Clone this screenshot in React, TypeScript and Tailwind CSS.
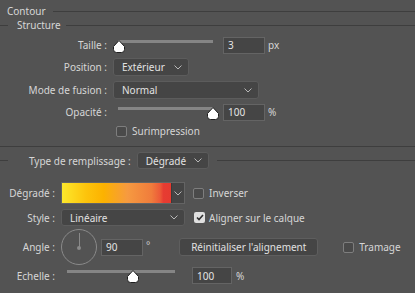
import React from 'react';

const Chevron = () => (
  <svg width="8" height="5" viewBox="0 0 8 5" className="shrink-0">
    <polyline points="0.5,0.5 4,4 7.5,0.5" fill="none" stroke="#b8b8b8" strokeWidth="1" />
  </svg>
);

const Thumb = () => (
  <svg width="12" height="13" viewBox="0 0 12 13">
    <path d="M6 0.5 L11.5 6.5 V9.5 Q11.5 12.5 8.5 12.5 H3.5 Q0.5 12.5 0.5 9.5 V6.5 Z" fill="#ffffff" stroke="#1e1e1e" strokeWidth="1" />
  </svg>
);

function Slider({ width, pos }: { width: number; pos: number }) {
  return (
    <div className="relative h-full shrink-0" style={{ width }}>
      <div className="absolute left-0 right-0 top-[4px] h-[3px] bg-[#858585]" />
      <div className="absolute top-[4px] flex" style={{ left: pos - 6 }}>
        <Thumb />
      </div>
    </div>
  );
}

function Select({ value, className }: { value: string; className: string }) {
  return (
    <div className={`flex items-center justify-between rounded-[3px] border border-[#5c5c5c] bg-[#454545] pl-[8px] pr-[6px] text-[#e2e2e2] ${className}`}>
      <span>{value}</span>
      <Chevron />
    </div>
  );
}

function NumInput({ value, className }: { value: string; className: string }) {
  return (
    <div className={`flex items-center border border-[#646464] bg-[#454545] pl-[4px] text-[#e4e4e4] ${className}`}>
      {value}
    </div>
  );
}

function Check({ checked }: { checked?: boolean }) {
  return checked ? (
    <div className="flex h-[11px] w-[11px] shrink-0 items-center justify-center rounded-[2px] bg-[#e0e0e0]">
      <svg width="8" height="7" viewBox="0 0 8 7">
        <polyline points="1,3.5 3,5.5 7,1" fill="none" stroke="#303030" strokeWidth="1.6" />
      </svg>
    </div>
  ) : (
    <div className="h-[11px] w-[11px] shrink-0 rounded-[2px] border border-[#7e7e7e] bg-[#4a4a4a]" />
  );
}

const Line = ({ className }: { className: string }) => <div className={`h-px bg-[#3e3e3e] ${className}`} />;

export default function App() {
  return (
    <div
      className="h-[293px] w-[415px] overflow-hidden bg-[#535353] pt-[4px] text-[10px] leading-none text-[#d6d6d6]"
      style={{ fontFamily: '"Noto Sans", "Liberation Sans", sans-serif' }}
    >
      {/* Contour */}
      <div className="flex h-[14px] items-center">
        <span className="ml-[7px]">Contour</span>
        <Line className="ml-[7px] flex-1" />
      </div>
      <div className="flex h-[14px] items-center">
        <Line className="w-[8px]" />
        <span className="ml-[9px]">Structure</span>
        <Line className="ml-[5px] flex-1" />
      </div>

      {/* Taille */}
      <div className="mt-[4px] flex h-[18px] items-center">
        <div className="w-[107px] text-right">Taille :</div>
        <div className="ml-[11px] h-full">
          <Slider width={95} pos={1} />
        </div>
        <NumInput value="3" className="ml-[10px] h-[17px] w-[42px]" />
        <span className="ml-[3px]">px</span>
      </div>

      {/* Position */}
      <div className="mt-[4px] flex h-[18px] items-center">
        <div className="w-[107px] text-right">Position :</div>
        <Select value="Extérieur" className="ml-[6px] h-[18px] w-[76px]" />
      </div>

      {/* Mode de fusion */}
      <div className="mt-[5px] flex h-[18px] items-center">
        <div className="w-[107px] text-right">Mode de fusion :</div>
        <Select value="Normal" className="ml-[6px] h-[18px] w-[146px]" />
      </div>

      {/* Opacité */}
      <div className="mt-[4px] flex h-[18px] items-center">
        <div className="w-[107px] text-right">Opacité :</div>
        <div className="ml-[11px] h-full">
          <Slider width={95} pos={95} />
        </div>
        <NumInput value="100" className="ml-[10px] h-[17px] w-[42px]" />
        <span className="ml-[3px]">%</span>
      </div>

      {/* Surimpression */}
      <div className="mt-[3px] flex h-[14px] items-center pl-[116px]">
        <Check />
        <span className="ml-[5px]">Surimpression</span>
      </div>

      <Line className="mt-[8px] w-full" />

      {/* Type de remplissage */}
      <div className="mt-[5px] flex h-[17px] items-center">
        <Line className="w-[8px]" />
        <span className="ml-[21px]">Type de remplissage :</span>
        <Select value="Dégradé" className="ml-[6px] h-[17px] w-[72px]" />
        <Line className="ml-[8px] flex-1" />
      </div>

      {/* Dégradé */}
      <div className="mt-[13px] flex h-[22px] items-center">
        <div className="w-[55px] text-right">Dégradé :</div>
        <div className="ml-[6px] flex h-[22px] w-[124px] border border-[#646464] bg-[#454545]">
          <div className="h-full flex-1 bg-[linear-gradient(90deg,#fde82c_0%,#fdc40c_22%,#fcb200_38%,#f69a40_60%,#f07c3c_82%,#ec5a38_90%,#e73c32_93%,#e53a30_100%)]" />
          <div className="flex w-[13px] items-center justify-center border-l border-[#3a3a3a]">
            <Chevron />
          </div>
        </div>
        <div className="ml-[8px] flex items-center">
          <Check />
          <span className="ml-[5px]">Inverser</span>
        </div>
      </div>

      {/* Style */}
      <div className="mt-[5px] flex h-[17px] items-center">
        <div className="w-[55px] text-right">Style :</div>
        <Select value="Linéaire" className="ml-[6px] h-[17px] w-[124px]" />
        <div className="ml-[9px] flex items-center">
          <Check checked />
          <span className="ml-[4px]">Aligner sur le calque</span>
        </div>
      </div>

      {/* Angle */}
      <div className="mt-[3px] flex h-[36px] items-center">
        <div className="w-[55px] text-right">Angle :</div>
        <div className="ml-[6px] flex h-[36px] w-[36px] shrink-0 flex-col items-center rounded-full border border-[#8a8a8a] pt-[3px]">
          <div className="h-[15px] w-px bg-[#8a8a8a]" />
          <div className="-mt-[2px] h-[4px] w-[4px] rounded-full bg-[#8a8a8a]" />
        </div>
        <NumInput value="90" className="ml-[4px] h-[17px] w-[42px]" />
        <span className="ml-[3px] -mt-[5px] text-[#c8c8c8]">°</span>
        <div className="ml-[29px] flex h-[18px] w-[139px] items-center justify-center rounded-[3px] border border-[#5e5e5e] bg-[#454545] text-[#e0e0e0]">
          Réinitialiser l&apos;alignement
        </div>
        <div className="ml-[25px] flex items-center">
          <Check />
          <span className="ml-[5px]">Tramage</span>
        </div>
      </div>

      {/* Echelle */}
      <div className="mt-[2px] flex h-[17px] items-center">
        <div className="w-[55px] text-right">Echelle :</div>
        <div className="ml-[12px] h-full">
          <div className="relative h-full w-[108px]">
            <div className="absolute left-0 right-0 top-[3px] h-[3px] bg-[#858585]" />
            <div className="absolute left-[60px] top-[3px] flex">
              <Thumb />
            </div>
          </div>
        </div>
        <NumInput value="100" className="ml-[17px] h-[17px] w-[40px]" />
        <span className="ml-[4px]">%</span>
      </div>
    </div>
  );
}
